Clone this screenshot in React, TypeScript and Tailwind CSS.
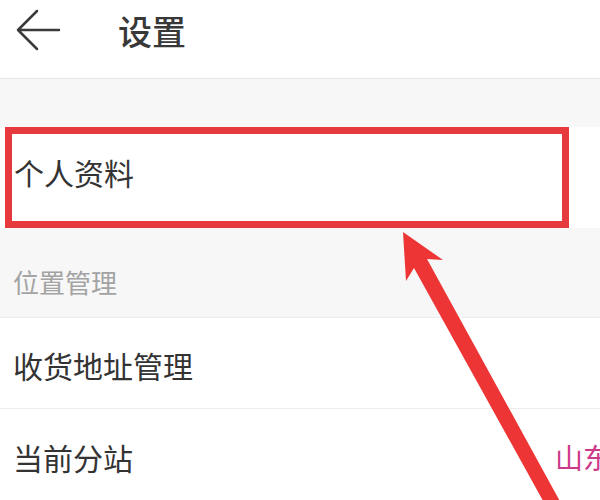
import React from 'react'

const font = { fontFamily: '"Noto Sans CJK SC", "Noto Sans", sans-serif' }

function Row({ label, right, divider = true }: { label: string; right?: string; divider?: boolean }) {
  return (
    <div
      className={`flex h-[91px] items-center justify-between bg-white pl-[13px] ${divider ? 'border-b border-[#ececec]' : ''}`}
    >
      <span className="mt-[4px] text-[30px] leading-none text-[#333]">{label}</span>
      {right && <span className="-mr-[20px] mt-[4px] w-[65px] overflow-hidden whitespace-nowrap text-[28px] leading-none text-[#cc3a8a]">{right}</span>}
    </div>
  )
}

export default function App() {
  return (
    <div className="relative h-[500px] w-[600px] overflow-hidden bg-[#f7f7f7]" style={font}>
      <div className="flex h-[79px] items-start border-b border-[#e6e6e6] bg-white pt-0">
        <svg width="60" height="60" viewBox="0 0 60 60" className="ml-[2px]">
          <path d="M57 30H16M16 30L35 11M16 30L35 49" fill="none" stroke="#3a3a3a" strokeWidth="2.5" strokeLinecap="round" />
        </svg>
        <span className="ml-[56px] mt-[14px] text-[34px] font-medium leading-none text-[#383838]">设置</span>
      </div>

      <div className="h-[48px]" />

      <div className="relative flex h-[101px] items-center bg-white pl-[14px]">
        <span className="-mt-[12px] text-[30px] leading-none text-[#333]">个人资料</span>
        <div className="absolute left-[5px] top-0 h-[101px] w-[564px] border-[7px] border-[#e63a3e]" />
      </div>

      <div className="flex h-[90px] items-center border-b border-[#ececec] pl-[13px] pt-[18px]">
        <span className="text-[26px] leading-none text-[#a3a3a3]">位置管理</span>
      </div>

      <Row label="收货地址管理" />
      <Row label="当前分站" right="山东省" divider={false} />

      <svg className="pointer-events-none absolute left-0 top-0" width="600" height="500" viewBox="0 0 600 500">
        <polygon
          points="403,232 443,260 427,259 562,505 547,508 414,268 406,281"
          fill="#ee3535"
        />
      </svg>
    </div>
  )
}
